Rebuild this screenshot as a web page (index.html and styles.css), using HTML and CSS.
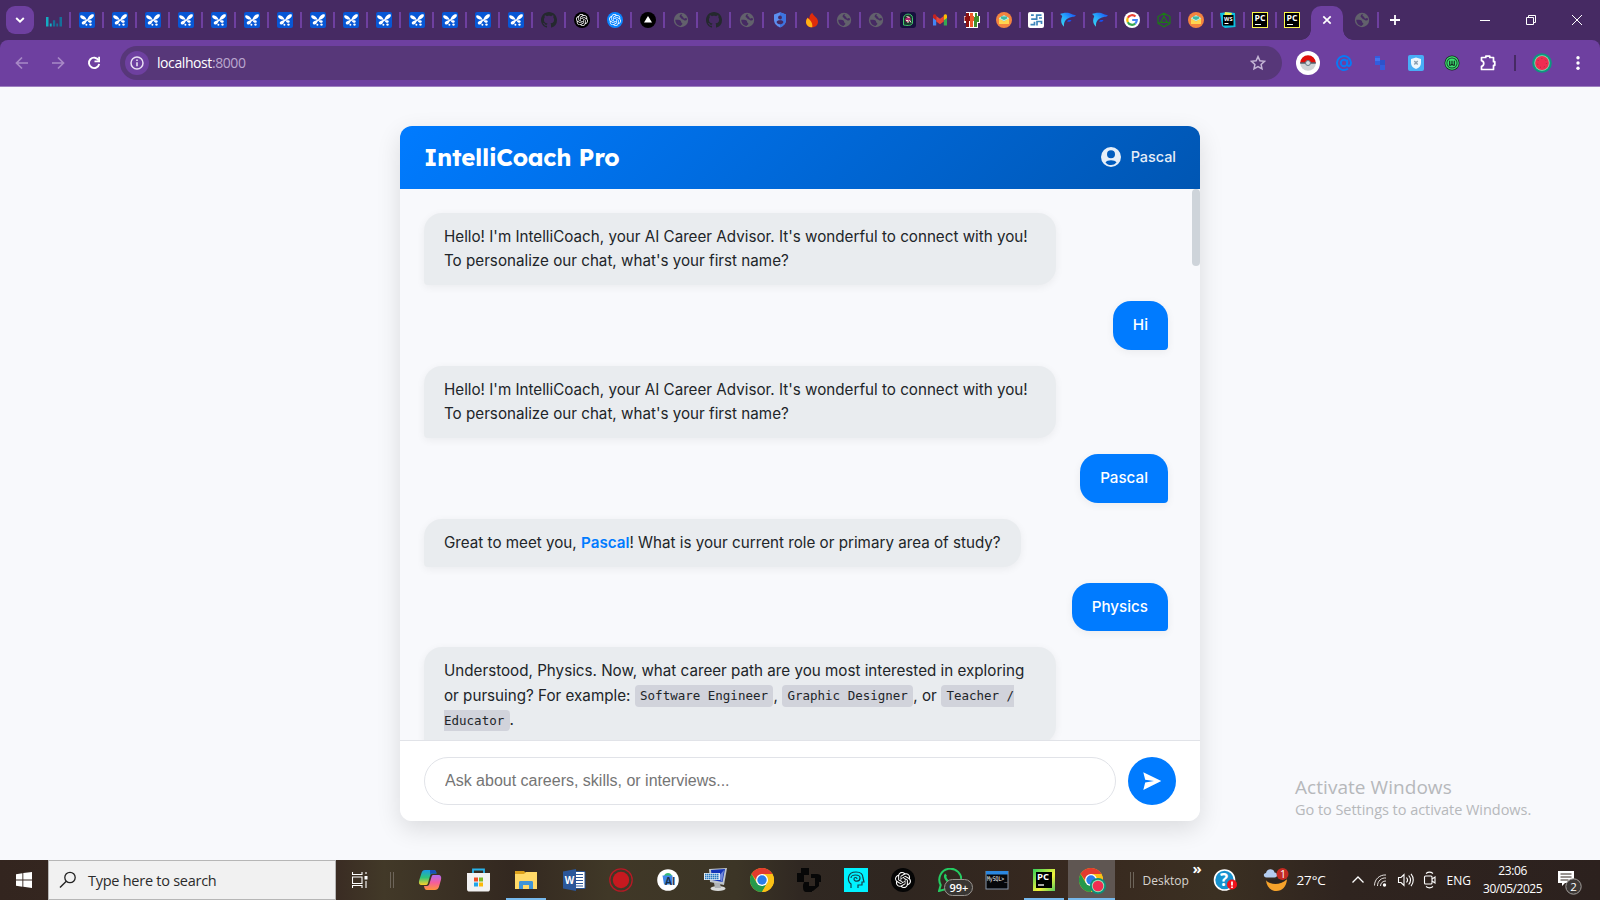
FILE: index.html
```
<!DOCTYPE html>
<html lang="en">
<head>
<meta charset="utf-8">
<title>IntelliCoach Pro</title>
<link rel="stylesheet" href="styles.css">
</head>
<body>
<svg class="sprite" aria-hidden="true">
  <symbol id="butterfly" viewBox="0 0 16 16"><rect width="16" height="16" rx="2" fill="#0757d5"/><path d="M7.700 8C7 5.300 4.800 3 2 3.200c-1 .1-1 1.500-.3 2.600C2.500 7 4 7.500 5.800 7.600z" fill="#fff"/><path d="M8.400 7.800C9 4.800 11.500 2 14.200 2.300c1 .2.8 1.700.1 2.800C13.200 6.800 11 7.500 9.600 8z" fill="#fff"/><path d="M8.500 6.800C7 8.500 5.800 8.500 4 9.200c-1.500.6-1.800 2.600-.3 3.200 1.500.5 2.800-.4 3.300-1.800C7.500 9.400 8.200 8.800 9 8.200zM8.500 8.500c.8-.5 2.600-.5 3.700.1.900.6.700 1.900-.3 2.200-1.400.3-2.800-.9-3.400-2.300z" fill="#fff"/><circle cx="7.400" cy="12.700" r="1" fill="#fff"/><circle cx="11.500" cy="12.600" r="1.200" fill="#fff"/></symbol>
  <symbol id="github" viewBox="0 0 16 16"><path fill="#24292e" d="M8 0C3.580 0 0 3.580 0 8c0 3.540 2.290 6.530 5.470 7.590.4.070.55-.17.55-.38 0-.19-.01-.82-.01-1.490-2.010.37-2.530-.49-2.690-.94-.09-.23-.48-.94-.82-1.130-.28-.15-.68-.52-.01-.53.63-.01 1.080.58 1.230.82.72 1.210 1.870.87 2.330.66.07-.52.28-.87.51-1.070-1.780-.2-3.640-.89-3.640-3.950 0-.87.31-1.590.82-2.150-.08-.2-.36-1.020.08-2.120 0 0 .67-.21 2.200.82.64-.18 1.320-.27 2-.27.68 0 1.360.09 2 .27 1.530-1.040 2.200-.82 2.200-.82.44 1.100.16 1.920.08 2.120.51.56.82 1.270.82 2.150 0 3.070-1.870 3.750-3.650 3.950.29.25.54.73.54 1.480 0 1.070-.01 1.930-.01 2.200 0 .21.15.46.55.38A8.010 8.010 0 0 0 16 8c0-4.420-3.580-8-8-8z"/></symbol>
  <symbol id="knot" viewBox="0 0 24 24"><path fill="currentColor" d="M22.2819 9.8211a5.9847 5.9847 0 0 0-.5157-4.9108 6.0462 6.0462 0 0 0-6.5098-2.9A6.0651 6.0651 0 0 0 4.9807 4.1818a5.9847 5.9847 0 0 0-3.9977 2.9 6.0462 6.0462 0 0 0 .7427 7.0966 5.98 5.98 0 0 0 .511 4.9107 6.051 6.051 0 0 0 6.5146 2.9001A5.9847 5.9847 0 0 0 13.2599 24a6.0557 6.0557 0 0 0 5.7718-4.2058 5.9894 5.9894 0 0 0 3.9977-2.9001 6.0557 6.0557 0 0 0-.7475-7.0729zm-9.022 12.6081a4.4755 4.4755 0 0 1-2.8764-1.0408l.1419-.0804 4.7783-2.7582a.7948.7948 0 0 0 .3927-.6813v-6.7369l2.02 1.1686a.071.071 0 0 1 .038.052v5.5826a4.504 4.504 0 0 1-4.4945 4.4944zm-9.6607-4.1254a4.4708 4.4708 0 0 1-.5346-3.0137l.142.0852 4.783 2.7582a.7712.7712 0 0 0 .7806 0l5.8428-3.3685v2.3324a.0804.0804 0 0 1-.0332.0615L9.74 19.9502a4.4992 4.4992 0 0 1-6.1408-1.6464zM2.3408 7.8956a4.485 4.485 0 0 1 2.3655-1.9728V11.6a.7664.7664 0 0 0 .3879.6765l5.8144 3.3543-2.0201 1.1685a.0757.0757 0 0 1-.071 0l-4.8303-2.7865A4.504 4.504 0 0 1 2.3408 7.872zm16.5963 3.8558L13.1038 8.364 15.1192 7.2a.0757.0757 0 0 1 .071 0l4.8303 2.7913a4.4944 4.4944 0 0 1-.6765 8.1042v-5.6772a.79.79 0 0 0-.407-.667zm2.0107-3.0231l-.142-.0852-4.7735-2.7818a.7759.7759 0 0 0-.7854 0L9.409 9.2297V6.8974a.0662.0662 0 0 1 .0284-.0615l4.8303-2.7866a4.4992 4.4992 0 0 1 6.6802 4.66zM8.3065 12.863l-2.02-1.1638a.0804.0804 0 0 1-.038-.0567V6.0742a4.4992 4.4992 0 0 1 7.3757-3.4537l-.142.0805L8.704 5.459a.7948.7948 0 0 0-.3927.6813zm1.0976-2.3654l2.602-1.4998 2.6069 1.4998v2.9994l-2.5974 1.4997-2.6067-1.4997Z"/></symbol>
  <symbol id="globe" viewBox="0 0 16 16"><circle cx="8" cy="8" r="7.200" fill="#62616c"/><path d="M2.300 7.800c2.200-.3 4.400-.1 5.400 1 .7.8 0 1.300.9 1.900.9.500 1 1.200.4 1.900l-1.500 1.500C4.500 13.700 2.200 11 2.300 7.800zM9.300 2.300C8 3.300 8.300 4.100 9.500 4.600c.9.300.6 1.400 1.500 1.800 1.200.4 1.300-.6 2.500-.4L14 8c-1 .6-2.300.7-3.200-.1-.8-.8-2.200-.5-2.600-1.700-.3-1-1.600-.7-1.600-1.800 0-1 1-1.700 1.300-2.100z" fill="#462a63"/></symbol>
  <symbol id="mail" viewBox="0 0 16 16"><circle cx="8" cy="8" r="8" fill="#f4843f"/><path d="M3 6l5-3 5 3v1L8 9.500 3 7z" fill="#b7eadc"/><path d="M5 4.500h6v2L8 8 5 6.500z" fill="#3db9a3"/><path d="M3 6.500l5 3 5-3V12H3z" fill="#ffd54f"/></symbol>
  <symbol id="dolphin" viewBox="0 0 16 16"><defs><linearGradient id="dg" x1="0" y1="1" x2="1" y2="0"><stop offset="0" stop-color="#36e0f5"/><stop offset=".5" stop-color="#27a8fb"/><stop offset="1" stop-color="#1646f5"/></linearGradient></defs><path d="M0 2C3 .8 8-.2 11.500 2c1.500.8 3 .8 4.500 1.500-1.200 1.300-2.800 1.300-4.200 1.500C6 6 3.500 10 4 14.800 1 12 .3 8 2.200 4.500 1.900 3.200 1 2.600 0 2z" fill="url(#dg)"/><path d="M7 9.500c.5-1.500 2-2 4.500-1.300-1 1.800-2.600 2-4.500 1.300z" fill="#1750f4"/></symbol>
  <symbol id="chrome" viewBox="0 0 24 24"><circle cx="12" cy="12" r="12" fill="#fbc116"/><path d="M1.600 6A12 12 0 0 1 22.400 6H12L8 14.500z" fill="#e33b2e"/><path d="M1.600 6A12 12 0 0 0 12 24l5.200-9L12 12 6.800 15z" fill="#26984b"/><path d="M22.400 6H12v6l5.200 3L12 24A12 12 0 0 0 22.400 6z" fill="#fbc116"/><circle cx="12" cy="12" r="6" fill="#fff"/><circle cx="12" cy="12" r="4.700" fill="#2b7de9"/></symbol>
</svg>

<header class="browser">
  <div class="tabs">
    <button class="tabsearch"><svg width="10" height="6" viewBox="0 0 10 6"><path d="M1.200 1l3.800 3.700L8.800 1" fill="none" stroke="#fff" stroke-width="1.900"/></svg></button>
    <div class="tab"><svg viewBox="0 0 16 16"><g fill="#14acc4"><path d="M0 5h2.500v9.500H0zM3.800 11.500h1.900v3H3.800z"/></g><path fill="#15709a" d="M6.900 8.200h2.300v6.300H6.900zM10.300 11.500h1.800v3h-1.800zM13.500 5H16v9.500h-2.500z"/></svg></div>
    <div class="tab"><svg><use href="#butterfly"/></svg></div>
    <div class="tab"><svg><use href="#butterfly"/></svg></div>
    <div class="tab"><svg><use href="#butterfly"/></svg></div>
    <div class="tab"><svg><use href="#butterfly"/></svg></div>
    <div class="tab"><svg><use href="#butterfly"/></svg></div>
    <div class="tab"><svg><use href="#butterfly"/></svg></div>
    <div class="tab"><svg><use href="#butterfly"/></svg></div>
    <div class="tab"><svg><use href="#butterfly"/></svg></div>
    <div class="tab"><svg><use href="#butterfly"/></svg></div>
    <div class="tab"><svg><use href="#butterfly"/></svg></div>
    <div class="tab"><svg><use href="#butterfly"/></svg></div>
    <div class="tab"><svg><use href="#butterfly"/></svg></div>
    <div class="tab"><svg><use href="#butterfly"/></svg></div>
    <div class="tab"><svg><use href="#butterfly"/></svg></div>
    <div class="tab"><svg><use href="#github"/></svg></div>
    <div class="tab knot"><svg viewBox="0 0 16 16"><circle cx="8" cy="8" r="8" fill="#000"/><use href="#knot" x="2" y="2" width="12" height="12"/></svg></div>
    <div class="tab knot"><svg viewBox="0 0 16 16"><circle cx="8" cy="8" r="8" fill="#0a84ff"/><use href="#knot" x="2" y="2" width="12" height="12"/></svg></div>
    <div class="tab"><svg viewBox="0 0 16 16"><circle cx="8" cy="8" r="8" fill="#000"/><path d="M8 4l4 6.500H4z" fill="#fff"/></svg></div>
    <div class="tab"><svg><use href="#globe"/></svg></div>
    <div class="tab"><svg><use href="#github"/></svg></div>
    <div class="tab"><svg><use href="#globe"/></svg></div>
    <div class="tab"><svg viewBox="0 0 16 16"><path d="M8 .3l6 2.200v5.300c0 3.600-2.500 6.300-6 7.700-3.500-1.400-6-4.100-6-7.700V2.500z" fill="#5c8ff0"/><path d="M8 .3l6 2.200v5.300c0 3.600-2.500 6.300-6 7.700z" fill="#3d73e0"/><circle cx="8" cy="5.500" r="1.900" fill="#462a63"/><path d="M4.600 10.300c0-2.600 6.800-2.600 6.800 0-1.100 2.700-5.700 2.700-6.800 0z" fill="#462a63"/></svg></div>
    <div class="tab slim"><svg viewBox="0 0 16 16"><path d="M8.300.800c.4 3 5.700 4.500 5.700 9 0 3.300-2.500 5.500-5.800 5.500S2 13 2 10C2 8 3 6 4 5.200c.3 1 .6 1.500 1.300 1.800C5.300 4.500 6 2.500 8.300.8z" fill="#e02c0a"/><path d="M3.500 6c2 1.500 5.500 4 4.800 9.300C4.500 15.300 2 13 2 10c0-1.500.7-3 1.500-4z" fill="#ffb116"/></svg></div>
    <div class="tab slim"><svg><use href="#globe"/></svg></div>
    <div class="tab slim"><svg><use href="#globe"/></svg></div>
    <div class="tab slim"><svg viewBox="0 0 16 16"><rect width="16" height="16" rx="3" fill="#17103e"/><path d="M3.500 13V5.500c1-4.500 8.500-4.500 9 0V11c-.5 2.500-4 3-9 2z" fill="#1b3a2f" stroke="#3fc46c"/><path d="M5 7l4-3 2 3-2 3H6z" fill="#b3246f"/><path d="M6.500 4.500l3 1M6 8.500h2v2.500M9.500 8l1.500 2.500" stroke="#f2f8d8" fill="none"/></svg></div>
    <div class="tab slim"><svg viewBox="0 0 16 16"><path d="M1 13.500V4l3.200 2.400v7.100z" fill="#4285f4"/><path d="M15 13.500V4l-3.200 2.400v7.100z" fill="#34a853"/><path d="M4.200 9.500V4L8 6.800 11.800 4v5.500L8 12.200z" fill="#ea4335"/><path d="M1 4c0-2 2-2 3.200-1v5.300L1 6z" fill="#c5221f"/><path d="M15 4c0-2-2-2-3.200-1v5.300L15 6z" fill="#fbbc04"/></svg></div>
    <div class="tab slim"><svg viewBox="0 0 16 16"><path d="M2 0h12v4h2v7h-2v5H2v-5H0V4h2z" fill="#fff"/><path d="M2 1h3v3h2v5H5v6H2V9H.5V4.500H2z" fill="#8c1010"/><path d="M6 1h3v3h1v5H9v6H6z" fill="#ef5a2b"/><path d="M11 1h2v3h2v6h-2v5h-3V5h1z" fill="#43902c"/></svg></div>
    <div class="tab slim"><svg><use href="#mail"/></svg></div>
    <div class="tab slim"><svg viewBox="0 0 16 16"><rect width="16" height="16" rx="2" fill="#fff"/><path d="M13.500 3.200H8.700v4H3.200M3 3.200h2.800M2.500 12.700h4V9.800M9 13.500V9.500h4.500v2.500M11 6h3" fill="none" stroke="#3f86bb" stroke-width="1.700"/></svg></div>
    <div class="tab slim"><svg><use href="#dolphin"/></svg></div>
    <div class="tab slim"><svg><use href="#dolphin"/></svg></div>
    <div class="tab slim"><svg viewBox="0 0 16 16"><circle cx="8" cy="8" r="8" fill="#fff"/><g fill="none" stroke-width="2.200"><path d="M11.500 4.600A4.800 4.800 0 0 0 3.800 5.800" stroke="#ea4335"/><path d="M3.800 5.800a4.800 4.800 0 0 0 0 4.400" stroke="#fbbc05"/><path d="M3.800 10.200a4.800 4.800 0 0 0 7.400 1.400" stroke="#34a853"/><path d="M11.200 11.600A4.800 4.800 0 0 0 12.800 8H8.200" stroke="#4285f4"/></g></svg></div>
    <div class="tab slim"><svg viewBox="0 0 16 16"><path d="M8 1.200l6 3.400v6.800l-6 3.400-6-3.400V4.600zM8 4.500l3.300 5.800H4.700zM8 1.200v3.300M2 11.400l2.700-1.100M14 11.400l-2.700-1.100" fill="none" stroke="#1c7a16" stroke-width="1.200"/></svg></div>
    <div class="tab slim"><svg><use href="#mail"/></svg></div>
    <div class="tab slim"><svg viewBox="0 0 16 16"><path d="M0 1l8-1 7 1 .5 14L5 16 2 14z" fill="#0bbfe0"/><path d="M5 0l7 1-1 3H4z" fill="#f3ef4c"/><rect x="3" y="3" width="10.500" height="10.500" fill="#000"/><text x="4" y="8.700" font-size="5.500" font-weight="700" textLength="8.500" lengthAdjust="spacingAndGlyphs" fill="#fff">WS</text><path d="M4.500 11.500h4" stroke="#fff"/></svg></div>
    <div class="tab slim"><svg viewBox="0 0 16 16"><rect x=".5" y=".5" width="15" height="15" fill="#000" stroke="#fcf84a"/><text x="2.500" y="9.200" font-size="8" font-weight="700" textLength="11" lengthAdjust="spacingAndGlyphs" fill="#fff">PC</text><path d="M3 12.500h6" stroke="#fff"/></svg></div>
    <div class="tab slim last"><svg viewBox="0 0 16 16"><rect x=".5" y=".5" width="15" height="15" fill="#000" stroke="#fcf84a"/><text x="2.500" y="9.200" font-size="8" font-weight="700" textLength="11" lengthAdjust="spacingAndGlyphs" fill="#fff">PC</text><path d="M3 12.500h6" stroke="#fff"/></svg></div>
    <div class="tab-active"><svg width="10" height="10" viewBox="0 0 10 10"><path d="M1.300 1.300l7.400 7.400M8.700 1.300L1.300 8.700" stroke="#fff" stroke-width="1.700"/></svg></div>
    <div class="tab after"><svg><use href="#globe"/></svg></div>
    <button class="newtab"><svg width="12" height="12" viewBox="0 0 12 12"><path d="M6 1v10M1 6h10" stroke="#fff" stroke-width="1.800"/></svg></button>
    <div class="wincontrols">
      <svg width="12" height="12" viewBox="0 0 12 12"><path d="M1 6.500h10" stroke="#fff"/></svg>
      <svg width="12" height="12" viewBox="0 0 12 12"><path d="M1.500 3.500h7v7h-7zM3.500 3.500v-2h7v7h-2" fill="none" stroke="#fff"/></svg>
      <svg width="12" height="12" viewBox="0 0 12 12"><path d="M1 1l10 10M11 1L1 11" stroke="#fff"/></svg>
    </div>
  </div>
  <div class="toolbar">
    <div class="nav">
      <svg class="dim" viewBox="0 0 16 16"><path d="M14 8H3M8 2.500L2.500 8 8 13.500" fill="none" stroke="currentColor" stroke-width="1.700"/></svg>
      <svg class="dim" viewBox="0 0 16 16"><path d="M2 8h11M8 2.500L13.500 8 8 13.500" fill="none" stroke="currentColor" stroke-width="1.700"/></svg>
      <svg viewBox="0 0 16 16"><path d="M12.600 5.200A5.200 5.200 0 1 0 13.200 9" fill="none" stroke="#fff" stroke-width="1.900"/><path d="M14 1.800v5.500H8.500V5.500h3.700V1.800z" fill="#fff"/></svg>
    </div>
    <div class="omnibox">
      <span class="siteinfo"><svg width="14" height="14" viewBox="0 0 14 14"><circle cx="7" cy="7" r="6" fill="none" stroke="#e8dff2" stroke-width="1.500"/><path d="M7 6.200V10.300M7 3.500v1.500" stroke="#e8dff2" stroke-width="1.600"/></svg></span>
      <span class="url">localhost<span class="port">:8000</span></span>
      <svg class="star" width="16" height="16" viewBox="0 0 16 16"><path d="M8 1.600l1.900 4.200 4.600.5-3.400 3.100.9 4.500-4-2.300-4 2.300.9-4.500L1.500 6.300l4.600-.5z" fill="none" stroke="#c5b6d6" stroke-width="1.500"/></svg>
    </div>
    <div class="extensions">
      <svg width="24" height="24" viewBox="0 0 24 24"><circle cx="12" cy="12" r="12" fill="#fff"/><path d="M4.200 12a7.800 7.800 0 0 1 15.600 0z" fill="#df0e09"/><path d="M4.200 12a7.800 7.800 0 0 0 15.600 0z" fill="#cfd3d5"/><path d="M4.200 12h15.600" stroke="#50616b" stroke-width="1.500"/><circle cx="12" cy="12" r="2.500" fill="#d7dfe2" stroke="#667b84"/></svg>
      <svg width="24" height="24" viewBox="0 0 24 24"><g fill="none" stroke="#087af5" stroke-width="1.900"><circle cx="12" cy="12" r="3.200"/><path d="M15.300 8.500v5c0 2.500 3.700 2 3.700-1.700a7 7 0 1 0-3 6"/></g></svg>
      <svg width="24" height="24" viewBox="0 0 24 24"><path d="M7 5h5v4h5v10h-5v-5H7z" fill="#335ddd"/><path d="M12 9h5v5h-5z" fill="#2d52cb"/><path d="M7 7h5v3H7z" fill="#4274f0"/></svg>
      <svg width="24" height="24" viewBox="0 0 24 24"><rect x="4" y="4" width="16" height="16" rx="2" fill="#48aef6"/><path d="M12 6.500l5 1.500v4c0 3-2 5-5 6-3-1-5-3-5-6V8z" fill="#edf6fc"/><path d="M10.300 10l3.400 3.500M13.700 10l-3.400 3.500" stroke="#8a9fb2" stroke-width="1.500"/></svg>
      <svg width="24" height="24" viewBox="0 0 24 24"><circle cx="12" cy="12" r="7.500" fill="#15231b"/><circle cx="12" cy="12" r="6.200" fill="#174a2b" stroke="#3ddf72" stroke-width="1.200"/><circle cx="12" cy="12" r="4.600" fill="#3ddf72"/><path d="M9.700 9.700v4.500h1.200l1.100-1.200 1.100 1.200h1.200V9.700M12 9.700V13" fill="none" stroke="#12241a" stroke-width="1.100"/></svg>
      <svg width="24" height="24" viewBox="0 0 24 24"><path d="M5.500 6.500h4.300V5.200h4V6.500h3.700v4.200h1.300v3.600h-1.300v4.200h-12v-3.200c3-.6 3-4.900 0-5.600z" fill="none" stroke="#fff" stroke-width="1.700" stroke-linejoin="round"/></svg>
      <i class="bar"></i>
      <svg width="24" height="24" viewBox="0 0 24 24" class="profile"><circle cx="12" cy="12" r="9.800" fill="#0e967f"/><circle cx="12" cy="12" r="7.700" fill="#8ae0b0"/><circle cx="12" cy="12" r="6.900" fill="#f02d52"/><circle cx="12" cy="12" r="4.500" fill="none" stroke="#a62b46" stroke-dasharray="1 3"/></svg>
      <svg width="24" height="24" viewBox="0 0 24 24" class="more"><g fill="#fff"><circle cx="12" cy="6.700" r="1.700"/><circle cx="12" cy="12" r="1.700"/><circle cx="12" cy="17.300" r="1.700"/></g></svg>
    </div>
  </div>
</header>

<main class="page">
  <section class="chat">
    <div class="chat-header">
      <h1>IntelliCoach Pro</h1>
      <div class="user"><svg width="20" height="20" viewBox="0 0 20 20"><path fill-rule="evenodd" fill="#fff" d="M10 0a10 10 0 1 0 0 20 10 10 0 0 0 0-20zm0 3.200a4 4 0 1 1 0 8 4 4 0 0 1 0-8zm0 14.900c-2.300 0-4.300-1-5.500-2.600 1.500-2.900 9.500-2.900 11 0A7 7 0 0 1 10 18.100z"/></svg>Pascal</div>
    </div>
    <div class="messages">
      <div class="msg bot">Hello! I'm IntelliCoach, your AI Career Advisor. It's wonderful to connect with you! To personalize our chat, what's your first name?</div>
      <div class="msg me">Hi</div>
      <div class="msg bot">Hello! I'm IntelliCoach, your AI Career Advisor. It's wonderful to connect with you! To personalize our chat, what's your first name?</div>
      <div class="msg me">Pascal</div>
      <div class="msg bot">Great to meet you, <strong>Pascal</strong>! What is your current role or primary area of study?</div>
      <div class="msg me">Physics</div>
      <div class="msg bot">Understood, Physics. Now, what career path are you most interested in exploring or pursuing? For example: <code>Software Engineer</code>, <code>Graphic Designer</code>, or <code>Teacher / Educator</code>.</div>
      <i class="scrollthumb"></i>
    </div>
    <form class="composer">
      <input type="text" placeholder="Ask about careers, skills, or interviews...">
      <button type="button" class="send" aria-label="Send"><svg width="20" height="20" viewBox="0 0 20 20"><path d="M1.300 1.200L19.300 10 1.300 19l1.900-7.600L12 10 3.200 8.700z" fill="#fff"/></svg></button>
    </form>
  </section>
  <div class="watermark"><div class="wm-title">Activate Windows</div><div class="wm-sub">Go to Settings to activate Windows.</div></div>
</main>

<footer class="taskbar">
  <div class="cell"><svg width="16" height="16" viewBox="0 0 16 16"><path d="M0 2.200L6.400 1.300V7.500H0zM7.300 1.100L16 0v7.500H7.300zM0 8.400h6.400v6.300L0 13.800zM7.300 8.400H16V16l-8.700-1.200z" fill="#fff"/></svg></div>
  <div class="search"><svg width="18" height="18" viewBox="0 0 18 18"><circle cx="11" cy="6.500" r="5.200" fill="none" stroke="#222" stroke-width="1.300"/><path d="M7.300 10.300L1 16.500" stroke="#222" stroke-width="1.400"/></svg><span>Type here to search</span></div>
  <div class="cell"><svg width="16" height="16" viewBox="0 0 16 16"><g fill="none" stroke="#fff" stroke-width="1.100"><path d="M.5 5h9.500v6.500H.5zM.5 0v2.500H10V0M.5 16v-2.500H10V16M14 0v2M14 9v7"/></g><rect x="12.500" y="4" width="3" height="3.500" fill="#fff"/></svg></div>
  <div class="grip"></div>
  <div class="apps">
    <div class="app wide"><svg viewBox="0 0 24 24"><defs><linearGradient id="c1" x2="0" y2="1"><stop offset="0" stop-color="#189be8"/><stop offset=".5" stop-color="#2ec47b"/><stop offset="1" stop-color="#ffcf28"/></linearGradient><linearGradient id="c2" x2="0" y2="1"><stop offset="0" stop-color="#b06bf2"/><stop offset=".5" stop-color="#f55d9c"/><stop offset="1" stop-color="#ff943b"/></linearGradient></defs><path d="M7 2h9c1.500 0 2 1.500 2.500 3.500h-4c-1.500 0-2 1-2.500 2.500l-2 7c-.4 1.500-1 2-2.500 2H4c-3 0-3.500-2-2.700-5L3.500 5C4.200 3 5 2 7 2z" fill="url(#c1)"/><path d="M12 2h4c1.500 0 2 1.500 2.500 3.500h-4c-1 0-2 .5-2.300 2z" fill="#174fb9"/><path d="M17 22H9c-2 0-2.500-1.500-3-4h3c1.500 0 2-1 2.500-2.500l2-6.500c.5-1.700 1-2 2.500-2h4c3 0 3.700 2 2.900 5l-2 7c-.7 2-2 3-3.900 3z" fill="url(#c2)"/></svg></div>
    <div class="app wide"><svg viewBox="0 0 24 24"><path d="M7 6V1.500h11V6" fill="none" stroke="#28b3ea" stroke-width="1.800"/><path d="M1 5h23v16c0 2-1 2.500-2.500 2.500h-18C2 23.500 1 23 1 21z" fill="#f2f2f2"/><path d="M8 9.500h4v4H8z" fill="#f04e26"/><path d="M13 9.500h4v4h-4z" fill="#7db928"/><path d="M8 14.500h4v4H8z" fill="#21a5e8"/><path d="M13 14.500h4v4h-4z" fill="#fbb908"/></svg></div>
    <div class="app wide open"><svg viewBox="0 0 24 24"><path d="M1 3h9l2 2h11v4H1z" fill="#dca11c"/><path d="M1 6h9l2-2h11v17H1z" fill="#ffd968"/><path d="M5 21v-6.500C5 13.500 5.500 13 6.500 13h11c1 0 1.500.5 1.500 1.500V21h-4v-4H9v4z" fill="#3e94d8"/></svg></div>
    <div class="app"><svg viewBox="0 0 24 24"><path d="M13 3.500h10v17H13z" fill="#fff" stroke="#244f91"/><path d="M14 6.500h7M14 9.500h7M14 12.500h7M14 15.500h7M14 18h7" stroke="#2b579a" stroke-width="1.200"/><path d="M1 3.500L14 1v22L1 20.500z" fill="#2b579a"/><text x="2.800" y="16" font-size="11" font-weight="700" textLength="9.500" lengthAdjust="spacingAndGlyphs" fill="#fff">W</text></svg></div>
    <div class="app"><svg viewBox="0 0 24 24"><circle cx="12" cy="12" r="11.200" fill="none" stroke="#b71925" stroke-width="1.300"/><circle cx="12" cy="12" r="8.200" fill="#c6191f"/></svg></div>
    <div class="app"><svg viewBox="0 0 24 24"><circle cx="12" cy="12" r="10.800" fill="#fff"/><path d="M8 8c1-4 7-4 8 0z" fill="#32b877"/><path d="M6.500 7.500h10v9H8z" fill="#4087ea"/><text x="9" y="17" font-size="10" font-weight="700" fill="#183048">AI</text></svg></div>
    <div class="app"><svg viewBox="0 0 24 24"><path d="M6 1l18-1-3 17-14-3z" fill="#bec5cc"/><path d="M8 2l14-1-2.500 13L9 12z" fill="#1434b8"/><path d="M15 9l6-7-2 12z" fill="#7088d9"/><path d="M1 5h16v7H1z" fill="#e4ecf5"/><path d="M2 6.500h14M2 8.500h14M2 10.500h14" stroke="#2679c1" stroke-width="1.300" stroke-dasharray="1.500 .5"/><ellipse cx="15" cy="20.500" rx="7.500" ry="2.500" fill="#d8dad9"/><path d="M11 15h6l1 5h-6z" fill="#aeb2b5"/></svg></div>
    <div class="app"><svg><use href="#chrome"/></svg></div>
    <div class="app"><svg viewBox="0 0 24 24"><path d="M4 0h8v7H7v7H0V5h4zM14 6h6c3 0 4.500 2 4.500 4v4H18V10h-4zM0 9h7v5H0zM7 14h5v4h3v6H9c-3 0-3-4-3-7zM14 18h4v-5h4v5l-6 5h-2z" fill="#070707"/></svg></div>
    <div class="app"><svg viewBox="0 0 24 24"><path fill="#00f2ff" d="M0 0h24v24H0z"/><path d="M7 20v-4c-4-3-4-12 5-12 5 0 7 3 7 6l1 4h-2v3h-4v3M7 10c0-4 9-4 9 0 0 4-6 4-6 1 0-2 3-2 3 0" fill="none" stroke="#123f4a" stroke-width="1.200"/></svg></div>
    <div class="app knot"><svg viewBox="0 0 24 24"><circle cx="12" cy="12" r="12" fill="#050505"/><use href="#knot" x="4" y="4" width="16" height="16"/></svg></div>
    <div class="app"><svg viewBox="0 0 24 24"><path d="M1 23l1.700-6A11 11 0 1 1 7 21.300z" fill="none" stroke="#24cc62" stroke-width="2"/><path d="M8 6.500c-3 3 4 11 8.500 9.500" fill="none" stroke="#24cc62" stroke-width="2.500"/></svg><span class="count">99+</span></div>
    <div class="app"><svg viewBox="0 0 24 24"><rect x="1" y="3.500" width="22" height="17.500" fill="#05070a" stroke="#8695a8"/><path d="M1 3h22v3.500H1z" fill="#2b87e0"/><text x="2" y="13" font-size="6.500" textLength="20" lengthAdjust="spacingAndGlyphs" fill="#fff" class="mono">MySQL&gt;_</text></svg></div>
    <div class="app open"><svg viewBox="0 0 24 24"><defs><linearGradient id="py" x2="1" y2="1"><stop offset="0" stop-color="#31cf5b"/><stop offset=".6" stop-color="#f3f23b"/><stop offset="1" stop-color="#55ca5c"/></linearGradient></defs><path d="M1 1h22v22H1z" fill="url(#py)"/><path d="M4 4h16v16H4z" fill="#000"/><text x="5" y="12" font-size="9" font-weight="700" textLength="12" lengthAdjust="spacingAndGlyphs" fill="#fff">PC</text><path d="M6 17h6" stroke="#fff" stroke-width="1.300"/></svg></div>
    <div class="app open current"><svg><use href="#chrome"/></svg><svg class="melon" viewBox="0 0 16 16"><circle cx="8" cy="8" r="8" fill="#0b8f7a"/><circle cx="8" cy="8" r="6.200" fill="#9fe4b7"/><circle cx="8" cy="8" r="5.300" fill="#f02d52"/></svg></div>
  </div>
  <div class="grip right"></div>
  <div class="desk">Desktop</div>
  <div class="raquo">»</div>
  <div class="cell help"><svg width="24" height="24" viewBox="0 0 24 24"><circle cx="11.500" cy="12" r="10" fill="#1692cf" stroke="#fff" stroke-width="1.600"/><text x="7" y="18" font-size="17" font-weight="700" fill="#fff">?</text><circle cx="19" cy="16.500" r="5" fill="#f1121c"/><path d="M19 13.500v4M19 18.500v1.400" stroke="#fff" stroke-width="1.700"/></svg></div>
  <div class="cell weather"><svg width="26" height="24" viewBox="0 0 26 24"><path d="M3 12c3 5 15 6 21-1-.5 8-5 12-10.500 12C8 23 3.500 19 3 12z" fill="#f5a22b"/><path d="M3 12l21-1c-6 5-16 6-21 1z" fill="#2b2420"/><path d="M3.500 9.500C0 9.500 0 5 3 5c.5-5 8-5 8.500-.5 3.500 0 3.500 5 0 5z" fill="#b4cdf0"/><circle cx="19.500" cy="6" r="6" fill="#c42b22"/><text x="17" y="10" font-size="10.500" fill="#fff">1</text></svg></div>
  <div class="temp">27°C</div>
  <div class="tray">
    <svg width="14" height="10" viewBox="0 0 14 10"><path d="M1.500 7.500L7 2l5.500 5.500" fill="none" stroke="#fff" stroke-width="1.300"/></svg>
    <svg width="16" height="16" viewBox="0 0 16 16"><g fill="none" stroke="#e7e3e1"><path d="M1.500 13.500C1.500 7 7 2.500 13 3"/><path d="M4.500 14C4.500 9 8.500 5.500 13 6"/><path d="M7.500 14C7.500 11 10 8.700 13 9"/></g><circle cx="11.500" cy="13" r="1.700" fill="#fff"/></svg>
    <svg width="18" height="16" viewBox="0 0 18 16"><g fill="none" stroke="#fff" stroke-width="1.100"><path d="M1.500 5.500H4L7 2.500v11l-3-3H1.500zM9.500 5.500c1.300 1.500 1.300 3.500 0 5M11.700 3.500c2.200 2.700 2.200 6.300 0 9M14 1.800c3 3.600 3 8.800 0 12.400"/></g></svg>
    <svg width="14" height="18" viewBox="0 0 14 18"><g fill="none" stroke="#fff" stroke-width="1.100"><rect x="1.500" y="5" width="7.500" height="8" rx="1"/><path d="M9 8l3-2v6l-3-2M3 2.500c2-1.500 5-1.500 7 0M3 15.500c2 1.500 5 1.500 7 0"/></g></svg>
  </div>
  <div class="lang">ENG</div>
  <div class="clock"><div class="time">23:06</div><div class="date">30/05/2025</div></div>
  <div class="notes"><svg width="24" height="26" viewBox="0 0 24 26"><path d="M0 2h16v12H7l-3 3v-3H0z" fill="#fff"/><path d="M2.500 5h11M2.500 8h11M2.500 11h8" stroke="#32271f"/><circle cx="15.500" cy="17.500" r="7.700" fill="#3c3735" stroke="#a19d9b"/><text x="12.200" y="21.500" font-size="11.500" fill="#fff">2</text></svg></div>
</footer>
</body>
</html>
```

FILE: styles.css
```
* { box-sizing: border-box; }
body { margin: 0; height: 900px; overflow: hidden; display: flex; flex-direction: column; background: #f8f9fc; font-family: "Open Sans", sans-serif; }
button { border: 0; padding: 0; background: none; display: grid; place-items: center; }
svg { display: block; flex: none; }
.sprite { position: absolute; width: 0; height: 0; }

/* browser window */
.browser { height: 87px; background: #462a63; }
.tabs { height: 40px; display: flex; align-items: center; padding-left: 6px; }
.tabsearch { width: 28px; height: 28px; border-radius: 9px; background: #6e40a0; margin-right: 4px; }
.tab { width: 33px; height: 16px; padding-left: 8px; border-right: 2px solid #6e40a0; flex: none; }
.tab svg { width: 16px; height: 16px; }
.tab.slim { width: 32px; padding-left: 7px; }
.tab.last { border-color: transparent; }
.tab.after { width: 36px; padding-left: 11px; }
.knot { color: #fff; }
.tab-active { position: relative; width: 32px; height: 34px; margin: 6px 0 0 2px; background: #6e40a0; border-radius: 10px 10px 0 0; display: grid; place-items: center; padding-bottom: 6px; }
.tab-active::before, .tab-active::after { content: ""; position: absolute; bottom: 0; width: 10px; height: 10px; }
.tab-active::before { left: -10px; background: radial-gradient(circle at 0 0, transparent 9.5px, #6e40a0 10px); }
.tab-active::after { right: -10px; background: radial-gradient(circle at 100% 0, transparent 9.5px, #6e40a0 10px); }
.newtab { margin-left: 10px; }
.wincontrols { margin-left: auto; display: flex; gap: 34px; padding-right: 17px; }
.toolbar { height: 47px; display: flex; align-items: center; background: #6e40a0; border-bottom: 1px solid #9d80bf; border-radius: 8px 8px 0 0; padding-left: 14px; }
.nav { display: flex; gap: 20px; width: 106px; }
.nav svg { width: 16px; height: 16px; }
.dim { color: #a889c6; }
.omnibox { width: 1162px; height: 34px; border-radius: 17px; background: #573779; display: flex; align-items: center; padding: 0 16px 0 5px; }
.siteinfo { width: 24px; height: 24px; border-radius: 50%; background: #6e40a0; display: grid; place-items: center; }
.url { color: #fff; font: 14px "Open Sans", sans-serif; letter-spacing: -.42px; margin: 0 0 1px 8px; }
.port { color: #bba8cf; }
.star { margin-left: auto; }
.extensions { display: flex; align-items: center; gap: 12px; margin-left: 14px; }
.bar { width: 2px; height: 16px; background: #462a63; margin: 0 2px; }

/* application */
.page { flex: 1; padding-top: 39px; display: flex; justify-content: center; align-items: flex-start; position: relative; }
.chat { width: 800px; height: 695px; border-radius: 12px; overflow: hidden; display: flex; flex-direction: column; box-shadow: 0 8px 24px rgba(0,0,0,.12); background: #f8f9fc; font-family: Inter, sans-serif; }
.chat-header { height: 63px; flex: none; background: linear-gradient(135deg, #007bff, #0056b3); padding: 0 24px 2px; display: flex; justify-content: space-between; align-items: center; color: #fff; }
h1 { margin: 0; font: 700 24px/30px Lexend, Inter, sans-serif; font-feature-settings: "cv08", "cv11"; letter-spacing: -.28px; }
.user { display: flex; align-items: center; gap: 10px; font-size: 14.4px; font-weight: 500; line-height: 20px; opacity: .9; }
.messages { flex: 1; min-height: 0; overflow: hidden; position: relative; padding: 23.700px 32px 0 24px; display: flex; flex-direction: column; gap: 16px; font-size: 15.2px; line-height: 24.32px; color: #212529; }
.msg { padding: 12px 20px; border-radius: 18px; max-width: 85%; box-shadow: 0 2px 8px rgba(0,0,0,.06); flex: none; }
.bot { align-self: flex-start; background: #e9ecef; border-bottom-left-radius: 4px; }
.me { align-self: flex-end; background: #007bff; color: #fff; font-weight: 500; border-bottom-right-radius: 4px; }
.msg strong { font-weight: 600; color: #007bff; }
code { font: 12.5px Consolas, "DejaVu Sans Mono", monospace; background: #d1d3db; border-radius: 4px; padding: 3.200px 5.400px; }
.scrollthumb { position: absolute; right: 0; top: 0; width: 8px; height: 77px; border-radius: 4px; background: #ced4da; }
.composer { height: 81px; flex: none; border-top: 1px solid #e1e3e8; background: #fff; padding: 16px 24px; display: flex; gap: 12px; }
.composer input { flex: 1; height: 48px; border: 1px solid #e1e3e8; border-radius: 24px; padding: 0 20px; font: 16px "Liberation Sans", sans-serif; background: #fff; outline: 0; }
.composer input::placeholder { color: #757575; }
.send { width: 48px; height: 48px; border-radius: 50%; background: #007bff; }
.watermark { position: absolute; left: 1295px; top: 687px; color: #b6b8bb; white-space: nowrap; }
.wm-title { font-size: 19px; line-height: 26px; letter-spacing: .05px; }
.wm-sub { font-size: 14.500px; line-height: 20px; letter-spacing: -.04px; }

/* taskbar */
.taskbar { height: 40px; display: grid; grid-template-columns: 48px 288px 48px 22.600px 708px 28px 46px 19px 36px 53px 54px 94px 30px 78px 1fr; align-items: center; color: #fff; font-size: 13px; white-space: nowrap; background: linear-gradient(90deg, #33251f 0, #3a2c23 21%, #423928 24%, #332820 32%, #403827 38%, #3c3526 46%, #302822 50%, #2f2620 56%, #38291f 68%, #3b3022 76%, #2f241f 84%, #2c211e 100%); }
.cell { display: grid; place-items: center; height: 40px; }
.search { height: 40px; background: #f1f1f1; border: 1px solid #b6b6b6; color: #2b2b2b; display: flex; align-items: center; gap: 11px; padding-left: 10px; font-size: 14.500px; letter-spacing: -.26px; }
.grip { width: 4px; height: 16px; border: solid #6d655a; border-width: 0 1px; margin-left: 6px; }
.grip.right { margin-left: 15px; }
.apps { display: flex; height: 40px; }
.app { flex: 1; display: grid; place-items: center; position: relative; }
.app.wide { flex: 0 0 47.800px; }
.app svg { width: 24px; height: 24px; }
.app.open::after { content: ""; position: absolute; left: 4px; right: 4px; bottom: 0; height: 2px; background: #76b9ed; }
.app.current { background: #5f5652; }
.app.current::after { left: 0; right: 0; }
.app .melon { position: absolute; width: 16px; height: 16px; left: 22px; top: 18px; }
.count { position: absolute; left: 18px; top: 19px; width: 29px; height: 17px; border: 1px solid #99948f; border-radius: 9px; background: #393633; font-size: 11px; font-weight: 600; line-height: 15px; text-align: center; }
.mono { font-family: "DejaVu Sans Mono", monospace; }
.desk { font-size: 12px; color: #d8d4d0; }
.raquo { font-size: 15px; font-weight: 700; align-self: start; line-height: 17px; padding-left: 4px; }
.help { padding-right: 2px; }
.weather { padding-left: 11px; }
.temp { font-size: 13.500px; letter-spacing: -.2px; }
.tray { display: flex; align-items: center; gap: 8px; }
.lang { font-size: 12px; padding-left: 2px; }
.clock { text-align: center; font-size: 12px; line-height: 18px; padding-right: 2px; }
.time { letter-spacing: -.4px; }
.date { letter-spacing: -.45px; }
.notes { padding: 3px 0 0 5px; }
```
